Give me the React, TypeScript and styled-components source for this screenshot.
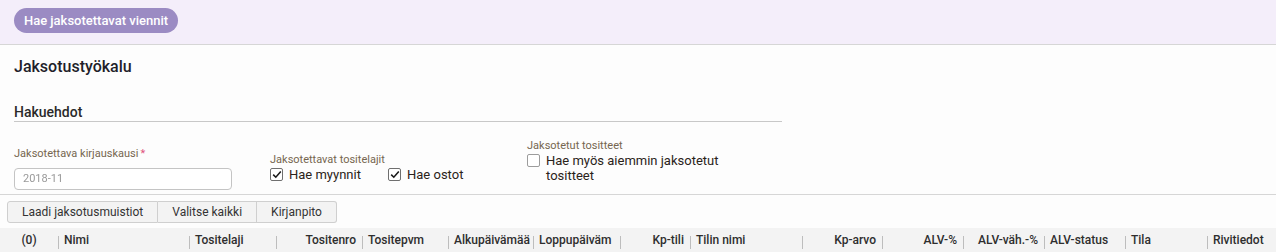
import React from 'react'
import styled, { createGlobalStyle } from 'styled-components'

const GlobalStyle = createGlobalStyle`
  html, body {
    margin: 0;
    padding: 0;
    background: #fdfdfd;
    font-family: Roboto, 'Liberation Sans', sans-serif;
    color: #262626;
  }
  * { box-sizing: border-box; }
`

const TopBar = styled.div`
  height: 45px;
  padding: 8px 14px 0;
  background: #f4eefa;
  border-bottom: 1px solid #d6d6d6;
`

const PrimaryButton = styled.button`
  height: 25px;
  width: 164px;
  padding: 0;
  border: none;
  border-radius: 13px;
  background: #9b8bc3;
  color: #fff;
  white-space: nowrap;
  font-family: inherit;
  font-size: 13px;
  font-weight: 500;
  cursor: pointer;
`

const Main = styled.div`
  padding: 0 14px;
`

const Title = styled.h1`
  margin: 0;
  padding-top: 11px;
  height: 50px;
  font-size: 16px;
  font-weight: 500;
  line-height: 22px;
  color: #1f1f2a;
`

const SectionHeading = styled.h2`
  margin: 0;
  width: 768px;
  padding-top: 9px;
  height: 27px;
  border-bottom: 1px solid #c8c8c8;
  font-size: 14px;
  font-weight: 500;
  line-height: 16px;
  color: #2a2a2a;
`

const FilterRow = styled.div`
  display: flex;
  align-items: flex-start;
  height: 72px;
  padding-top: 17px;
`

const Field = styled.div<{ width: number; top?: number }>`
  width: ${({ width }) => width}px;
  margin-top: ${({ top }) => top ?? 0}px;
  display: flex;
  flex-direction: column;
`

const Label = styled.label`
  font-size: 11px;
  line-height: 13px;
  color: #76664f;
`

const Required = styled.span`
  color: #e0557e;
  margin-left: 2px;
`

const TextInput = styled.div`
  margin-top: 8px;
  width: 218px;
  height: 22px;
  padding: 0 8px;
  border: 1px solid #c4c4c4;
  border-radius: 4px;
  background: #fff;
  font-size: 11px;
  line-height: 20px;
  color: #9a9a9a;
  span {
    filter: blur(0.7px);
  }
`

const CheckRow = styled.div`
  display: flex;
  align-items: flex-start;
  margin-top: 1px;
`

const CheckItem = styled.label<{ width?: number }>`
  display: flex;
  align-items: flex-start;
  gap: 6px;
  width: ${({ width }) => (width ? `${width}px` : 'auto')};
  font-size: 13px;
  line-height: 15px;
  color: #2b2319;
`

const Box = styled.span<{ checked?: boolean }>`
  flex: none;
  width: 13px;
  height: 13px;
  margin-top: 1px;
  border: 1px solid ${({ checked }) => (checked ? '#6f6f6f' : '#9c9c9c')};
  border-radius: 2px;
  background: #fff;
  display: flex;
  align-items: center;
  justify-content: center;
`

const Divider = styled.div`
  height: 1px;
  background: #d6d6d6;
`

const Toolbar = styled.div`
  display: flex;
  padding: 6px 7px 0;
  height: 33px;
`

const Segment = styled.button<{ first?: boolean; last?: boolean }>`
  height: 22px;
  padding: 0 ${({ first }) => (first ? 14 : 14)}px;
  border: 1px solid #cfcfcf;
  border-left-width: ${({ first }) => (first ? 1 : 0)}px;
  border-radius: ${({ first, last }) => (first ? '3px 0 0 3px' : last ? '0 3px 3px 0' : '0')};
  background: #f3f3f3;
  font-family: inherit;
  font-size: 12px;
  color: #333;
`

const HeaderRow = styled.div`
  display: grid;
  grid-template-columns: 58px 131px 87px 86px 86px 85px 87px 70px 112px 80px 81px 81px 81px 82px 69px;
  height: 25px;
  background: #f3f3f3;
  border-bottom: 1px solid #d0d0d0;
`

const HeaderCell = styled.div<{ align?: 'left' | 'right' | 'center'; divider?: boolean }>`
  position: relative;
  overflow: hidden;
  white-space: nowrap;
  padding: 0 6px;
  text-align: ${({ align }) => align ?? 'left'};
  font-size: 12px;
  font-weight: 500;
  line-height: 24px;
  color: #2e2e2e;
  &::before {
    content: '';
    display: ${({ divider }) => (divider === false ? 'none' : 'block')};
    position: absolute;
    left: 0;
    top: 8px;
    height: 13px;
    width: 1px;
    background: #bdbdbd;
  }
`

const Check = () => (
  <svg width="10" height="9" viewBox="0 0 10 9">
    <path d="M1.2 4.6 L3.8 7.2 L8.8 1.5" fill="none" stroke="#1a1a1a" strokeWidth="1.6" />
  </svg>
)

const columns: { label: string; align?: 'left' | 'right' | 'center' }[] = [
  { label: '(0)', align: 'center' },
  { label: 'Nimi' },
  { label: 'Tositelaji' },
  { label: 'Tositenro', align: 'right' },
  { label: 'Tositepvm' },
  { label: 'Alkupäivämää' },
  { label: 'Loppupäiväm' },
  { label: 'Kp-tili', align: 'right' },
  { label: 'Tilin nimi' },
  { label: 'Kp-arvo', align: 'right' },
  { label: 'ALV-%', align: 'right' },
  { label: 'ALV-väh.-%', align: 'right' },
  { label: 'ALV-status' },
  { label: 'Tila' },
  { label: 'Rivitiedot' },
]

export default function App() {
  return (
    <>
      <GlobalStyle />
      <TopBar>
        <PrimaryButton>Hae jaksotettavat viennit</PrimaryButton>
      </TopBar>
      <Main>
        <Title>Jaksotustyökalu</Title>
        <SectionHeading>Hakuehdot</SectionHeading>
        <FilterRow>
          <Field width={256} top={8}>
            <Label>
              Jaksotettava kirjauskausi<Required>*</Required>
            </Label>
            <TextInput>
              <span>2018-11</span>
            </TextInput>
          </Field>
          <Field width={257} top={14}>
            <Label>Jaksotettavat tositelajit</Label>
            <CheckRow>
              <CheckItem width={118}>
                <Box checked>
                  <Check />
                </Box>
                Hae myynnit
              </CheckItem>
              <CheckItem>
                <Box checked>
                  <Check />
                </Box>
                Hae ostot
              </CheckItem>
            </CheckRow>
          </Field>
          <Field width={200}>
            <Label>Jaksotetut tositteet</Label>
            <CheckRow>
              <CheckItem>
                <Box />
                <span>
                  Hae myös aiemmin jaksotetut
                  <br />
                  tositteet
                </span>
              </CheckItem>
            </CheckRow>
          </Field>
        </FilterRow>
      </Main>
      <Divider />
      <Toolbar>
        <Segment first>Laadi jaksotusmuistiot</Segment>
        <Segment>Valitse kaikki</Segment>
        <Segment last>Kirjanpito</Segment>
      </Toolbar>
      <HeaderRow>
        {columns.map((c, i) => (
          <HeaderCell key={c.label} align={c.align} divider={i !== 0}>
            {c.label}
          </HeaderCell>
        ))}
      </HeaderRow>
    </>
  )
}
